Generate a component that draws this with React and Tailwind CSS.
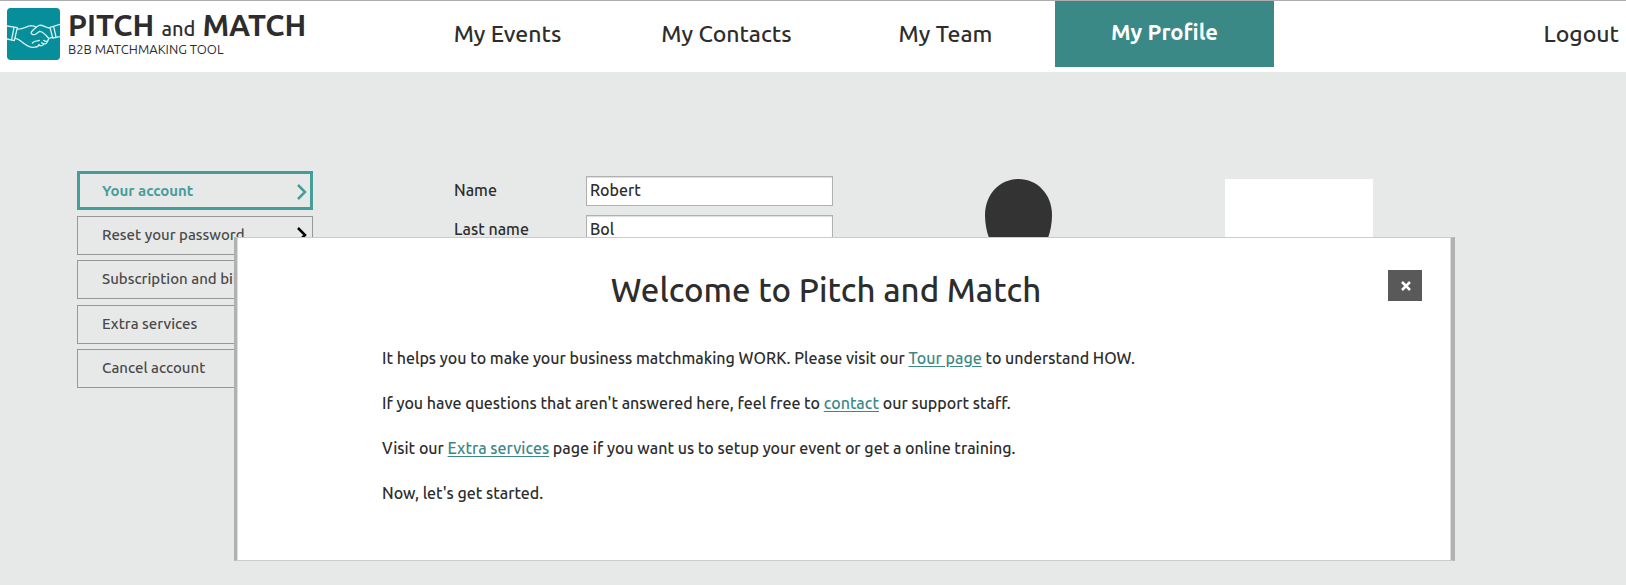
import { useState } from 'react';

const navItems = ['My Events', 'My Contacts', 'My Team', 'My Profile'];

const menuItems = [
  'Your account',
  'Reset your password',
  'Subscription and billing',
  'Extra services',
  'Cancel account',
];

const HandshakeLogo = () => (
  <svg className="h-[52px] w-[53px] shrink-0" viewBox="0 0 159 156" aria-hidden="true">
    <rect width="159" height="156" rx="11" fill="#068f9b" />
    <g fill="none" stroke="#d5f0f1" strokeWidth="4" strokeLinecap="round" strokeLinejoin="round">
      <path d="M0 54 L31 59 L22 98 L0 93" />
      <path d="M21 58 L14 95" />
      <path d="M32 63 C48 65 58 54 73 53 C80 53 84 55 88 58" />
      <path d="M24 91 C36 91 40 100 50 106 C58 112 68 120 80 118 C88 118 94 115 98 111" />
      <path d="M128 60 C117 60 108 50 97 52 C87 55 80 65 73 72 C70 79 80 82 87 78 L98 70 C106 71 116 80 124 90" />
      <path d="M159 49 L129 58 L137 90 L159 86" />
      <path d="M140 56 L147 87" />
      <path d="M136 88 C130 90 127 90 124 94 C124 102 116 102 110 97" />
      <path d="M121 100 C121 109 112 110 104 104" />
      <path d="M110 108 C107 115 100 114 95 110" />
      <path d="M76 105 C84 96 92 100 97 97" />
    </g>
  </svg>
);

const Chevron = () => (
  <svg className="h-4 w-[10px]" viewBox="0 0 10 16" fill="none" stroke="currentColor" strokeWidth="2.5" aria-hidden="true">
    <path d="M1 1 L8 8 L1 15" />
  </svg>
);

const Header = () => (
  <header className="flex h-[72px] border-t border-[#adadad] bg-white">
    <a href="#home" className="flex w-[398px] shrink-0 items-start gap-2 pt-[7px] pl-[7px]">
      <HandshakeLogo />
      <span className="flex flex-col pt-[3px]">
        <span className="text-[30px] leading-7 font-bold">
          PITCH <span className="text-xl font-medium">and</span> MATCH
        </span>
        <span className="text-[13px] leading-3">B2B MATCHMAKING TOOL</span>
      </span>
    </a>
    <nav className="flex">
      {navItems.map((item) => (
        <a
          key={item}
          href="#nav"
          className={
            item === 'My Profile'
              ? 'flex h-[66px] w-[219px] items-center justify-center bg-[#3b8987] pb-1.5 text-[22px] font-bold text-white'
              : 'flex h-[66px] w-[219px] items-center justify-center text-[23px] font-medium'
          }
        >
          {item}
        </a>
      ))}
    </nav>
    <a href="#logout" className="ml-auto flex h-[66px] items-center pr-[7px] text-[23px] font-medium">
      Logout
    </a>
  </header>
);

const AccountMenu = () => (
  <ul className="flex h-[217px] w-[236px] shrink-0 flex-col justify-between">
    {menuItems.map((item, i) => (
      <li key={item}>
        <a
          href="#account"
          className={
            i === 0
              ? 'flex h-[39px] items-center justify-between border-3 border-[#459d9b] pt-0.5 pr-[3px] pl-[22px] text-[15px] font-semibold text-[#459d9b]'
              : 'flex h-[39px] items-center justify-between border border-[#979797] pr-[5px] pl-6 text-[15px] font-medium text-[#4a4a4a]'
          }
        >
          {item}
          <span className={i === 0 ? '' : 'text-black'}>
            <Chevron />
          </span>
        </a>
      </li>
    ))}
  </ul>
);

const Field = ({ id, label, value }) => (
  <div className="flex items-center">
    <label htmlFor={id} className="w-[132px] pb-0.5 text-base font-medium">
      {label}
    </label>
    <input
      id={id}
      type="text"
      defaultValue={value}
      className="h-[30px] w-[247px] border border-[#b0b0b0] bg-white px-[3px] pb-0.5 text-base font-medium shadow-[inset_0_1px_1px_#ddd]"
    />
  </div>
);

const WelcomeDialog = ({ onClose }) => {
  const link = 'text-[#3b8987] underline underline-offset-2';

  return (
    <div
      role="dialog"
      aria-labelledby="welcome-title"
      className="absolute top-[237px] right-[171px] left-[234px] border-y border-r-4 border-l-3 border-x-[#b1b1b1] border-y-[#cbcbcb] bg-white pb-[55px] shadow-[inset_1px_0_#dcdcdc,inset_-1px_0_#dcdcdc]"
    >
      <button
        type="button"
        aria-label="Close"
        onClick={onClose}
        className="absolute top-8 right-[29px] flex h-[31px] w-[34px] items-center justify-center bg-[#595959] pl-0.5 text-white"
      >
        <svg className="h-[10px] w-[10px]" viewBox="0 0 10 10" stroke="currentColor" strokeWidth="2.5" aria-hidden="true">
          <path d="M1 1 L9 9 M9 1 L1 9" />
        </svg>
      </button>
      <h1 id="welcome-title" className="pt-8 pr-9 text-center text-[33px] leading-10 font-medium">
        Welcome to Pitch and Match
      </h1>
      <div className="flex flex-col gap-[21px] pt-9 pl-[145px] text-base leading-6 font-medium">
        <p>
          It helps you to make your business matchmaking WORK. Please visit our{' '}
          <a href="#tour" className={link}>Tour page</a> to understand HOW.
        </p>
        <p>
          If you have questions that aren't answered here, feel free to{' '}
          <a href="#contact" className={link}>contact</a> our support staff.
        </p>
        <p>
          Visit our <a href="#services" className={link}>Extra services</a> page if you want us to
          setup your event or get a online training.
        </p>
        <p>Now, let's get started.</p>
      </div>
    </div>
  );
};

const App = () => {
  const [showWelcome, setShowWelcome] = useState(true);

  return (
    <div className="relative min-h-screen bg-[#e7e9e8] font-['Ubuntu','Noto_Sans',sans-serif] text-[#2d2d2d]">
      <Header />
      <main className="flex items-start pt-[99px] pl-[77px]">
        <AccountMenu />
        <form className="ml-[141px] flex shrink-0 flex-col gap-[9px] pt-[5px]">
          <Field id="name" label="Name" value="Robert" />
          <Field id="last-name" label="Last name" value="Bol" />
        </form>
        <svg className="mt-2 ml-[152px] h-[90px] w-[67px] shrink-0" viewBox="0 0 67 90" role="img" aria-label="Profile picture">
          <path d="M33.5 0 C52 0 67 15 67 36 C67 62 52 86 33.5 86 C15 86 0 62 0 36 C0 15 15 0 33.5 0 Z" fill="#333333" />
        </svg>
        <div className="mt-2 ml-[173px] h-[148px] w-[148px] shrink-0 bg-white" />
      </main>
      {showWelcome && <WelcomeDialog onClose={() => setShowWelcome(false)} />}
    </div>
  );
};

export default App;
